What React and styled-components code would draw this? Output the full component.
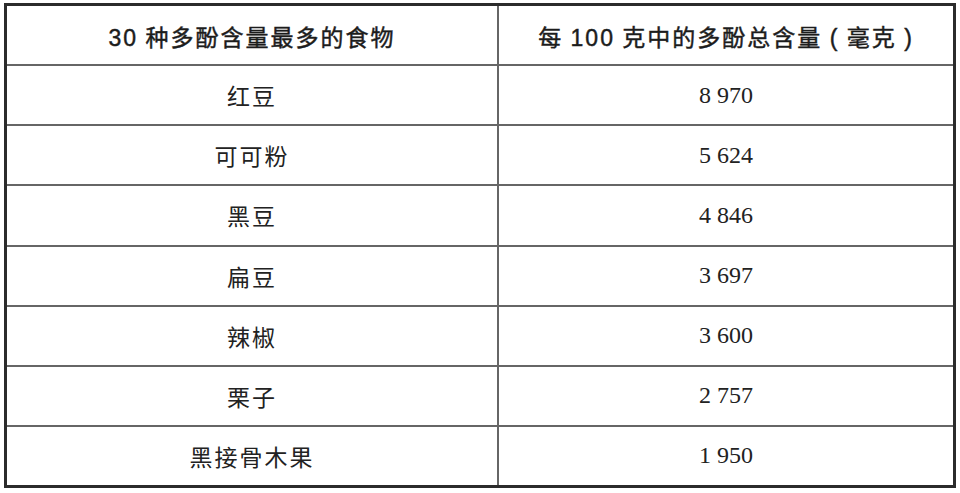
import React from 'react'
import styled, { createGlobalStyle } from 'styled-components'

const GlobalStyle = createGlobalStyle`
  html, body {
    margin: 0;
    padding: 0;
    background: #ffffff;
  }
`

const Page = styled.div`
  padding: 3px 4px;
`

const Frame = styled.div`
  box-sizing: border-box;
  width: 952px;
  height: 485px;
  border: 3px solid #2b2b2b;
  background: #666666;
  display: grid;
  grid-template-columns: 490px 1fr;
  grid-auto-rows: 1fr;
  gap: 2px;
`

const HeadCell = styled.div`
  background: #ffffff;
  display: flex;
  align-items: center;
  justify-content: center;
  font-family: "Liberation Sans", "Noto Sans CJK SC", sans-serif;
  font-size: 23px;
  letter-spacing: 2px;
  word-spacing: -1px;
  color: #1c1c1c;
  -webkit-text-stroke: 0.45px #1c1c1c;
  padding-top: 1px;
`

const Cell = styled.div`
  background: #ffffff;
  display: flex;
  align-items: center;
  justify-content: center;
  font-family: "Liberation Serif", "Noto Sans CJK SC", serif;
  font-size: ${(p) => (p.$num ? '24px' : '23px')};
  letter-spacing: ${(p) => (p.$num ? '0' : '2px')};
  color: #222222;
`

const foods = [
  ['红豆', '8 970'],
  ['可可粉', '5 624'],
  ['黑豆', '4 846'],
  ['扁豆', '3 697'],
  ['辣椒', '3 600'],
  ['栗子', '2 757'],
  ['黑接骨木果', '1 950'],
]

export default function App() {
  return (
    <Page>
      <GlobalStyle />
      <Frame>
        <HeadCell>30 种多酚含量最多的食物</HeadCell>
        <HeadCell>每 100 克中的多酚总含量 ( 毫克 )</HeadCell>
        {foods.map(([name, amount]) => (
          <React.Fragment key={name}>
            <Cell>{name}</Cell>
            <Cell $num>{amount}</Cell>
          </React.Fragment>
        ))}
      </Frame>
    </Page>
  )
}
